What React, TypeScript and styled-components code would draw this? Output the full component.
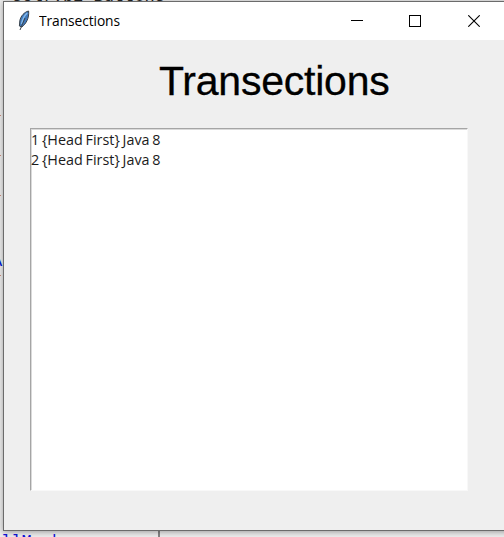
import React from "react";
import styled, { createGlobalStyle } from "styled-components";

const GlobalStyle = createGlobalStyle`
  * { box-sizing: border-box; }
  body { margin: 0; overflow: hidden; background: #efefef; }
`;

const Desktop = styled.div`
  position: relative;
  width: 504px;
  height: 537px;
  padding: 1px 0 0 3px;
  overflow: hidden;
  background: #ededed;
`;

const CodeBackdrop = styled.div<{ $x: number; $y: number; $color: string }>`
  position: absolute;
  left: ${(p) => p.$x}px;
  top: ${(p) => p.$y}px;
  color: ${(p) => p.$color};
  font: 17px/16px "Liberation Mono", monospace;
  white-space: pre;
`;

const EditorDivider = styled.div`
  position: absolute;
  left: 158px;
  bottom: 0;
  width: 2px;
  height: 7px;
  background: #858585;
`;

const EditorMark = styled.div<{ $y: number }>`
  position: absolute;
  left: 0;
  top: ${(p) => p.$y}px;
  width: 1px;
  height: 1px;
  background: #d08c7c;
`;

const Window = styled.main`
  position: relative;
  display: flex;
  flex-direction: column;
  width: 510px;
  height: 530px;
  border: 1px solid #6b6b6b;
  background: #efefef;
  box-shadow: 0 1px 6px rgba(0, 0, 0, 0.35);
`;

const TitleBar = styled.header`
  display: flex;
  align-items: center;
  height: 38px;
  flex: none;
  padding-left: 12px;
  background: #fff;
`;

const Title = styled.span`
  width: 80px;
  height: 22px;
  margin: 0 auto 0 7px;
  color: #000;
  font: 15px/20px "Open Sans", sans-serif;
  letter-spacing: -0.1px;
  white-space: nowrap;
  transform: scaleX(0.92);
  transform-origin: left;
`;

const Controls = styled.div`
  display: flex;
  width: 174px;
  margin-right: 9px;
`;

const ControlButton = styled.button`
  display: flex;
  align-items: center;
  justify-content: center;
  width: 58px;
  height: 38px;
  padding: 0;
  border: 0;
  background: transparent;

  &:not(:last-child) {
    transform: translateX(-1px);
  }
`;

const Content = styled.section`
  display: flex;
  flex-direction: column;
  padding: 18px 0 0 26px;
`;

const Heading = styled.h1`
  height: 46px;
  margin: 0 0 24px 129px;
  color: #000;
  font: 400 41px/46px "Liberation Sans", sans-serif;
  letter-spacing: -0.22px;
  -webkit-text-stroke: 0.3px #000;
  white-space: nowrap;
`;

const ListBox = styled.ul`
  width: 438px;
  height: 363px;
  margin: 0;
  padding: 0;
  list-style: none;
  background: #fff;
  border: 1px solid;
  border-color: #a5a5a5 #f8f8f8 #f8f8f8 #a5a5a5;
  box-shadow: inset 1px 1px 0 #dadada;
`;

const ListRow = styled.li`
  width: 150px;
  height: 20px;
  color: #1b1b1b;
  font: 15px/20px "Open Sans", sans-serif;
  word-spacing: -1px;
  white-space: nowrap;
  transform: scaleX(0.957);
  transform-origin: left;
`;

const Feather = () => (
  <svg width="16" height="22" viewBox="0 0 16 22">
    <path d="M12.6 1C8.5 2 4.5 6 3.8 11l-.4 5 2.4 1C10 14 13.4 8 12.6 1Z" fill="#3f78bb" stroke="#39434d" />
    <path d="M11.2 3C8 6 6.3 10 5.5 14" fill="none" stroke="#83b9eb" strokeWidth="1.5" />
    <path d="M9 8 4 20" fill="none" stroke="#39434d" />
  </svg>
);

const rows = ["1 {Head First} Java 8", "2 {Head First} Java 8"];

export default function App() {
  return (
    <Desktop>
      <GlobalStyle />
      <CodeBackdrop $x={12} $y={-11} $color="#222">self.bz_Buttons</CodeBackdrop>
      <CodeBackdrop $x={-8} $y={254} $color="#0018d8">A</CodeBackdrop>
      {[115, 155, 195, 275].map((y) => <EditorMark key={y} $y={y} />)}
      <CodeBackdrop $x={1} $y={534} $color="#1414dc">llMemb</CodeBackdrop>
      <EditorDivider />
      <Window>
        <TitleBar>
          <Feather />
          <Title>Transections</Title>
          <Controls>
            <ControlButton aria-label="Minimize">
              <svg width="12" height="12" shapeRendering="crispEdges"><path d="M0 5.5h12" stroke="#000" /></svg>
            </ControlButton>
            <ControlButton aria-label="Maximize">
              <svg width="12" height="12"><rect x=".5" y=".5" width="11" height="11" fill="none" stroke="#000" /></svg>
            </ControlButton>
            <ControlButton aria-label="Close">
              <svg width="12" height="12"><path d="m.3.3 11.4 11.4m0-11.4L.3 11.7" stroke="#000" strokeWidth="1.1" /></svg>
            </ControlButton>
          </Controls>
        </TitleBar>
        <Content>
          <Heading>Transections</Heading>
          <ListBox>{rows.map((r) => <ListRow key={r}>{r}</ListRow>)}</ListBox>
        </Content>
      </Window>
    </Desktop>
  );
}
